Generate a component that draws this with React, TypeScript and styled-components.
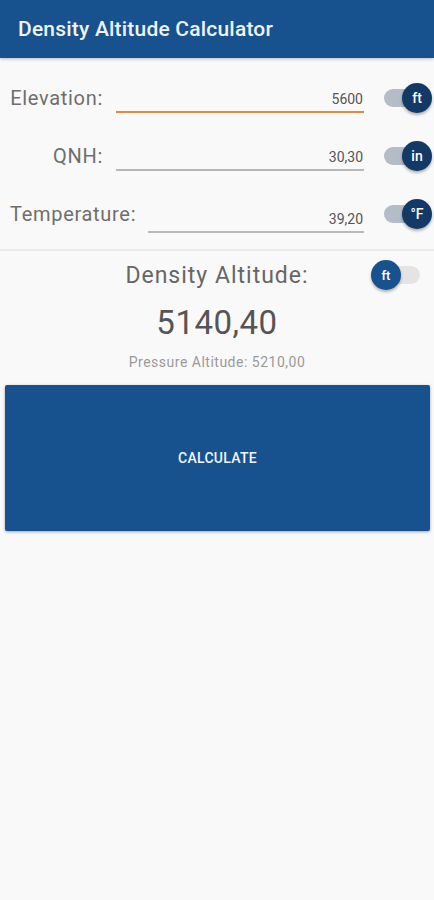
import styled, { createGlobalStyle } from 'styled-components';

const GlobalStyle = createGlobalStyle`
  html, body {
    margin: 0;
    padding: 0;
    background: #f9f9f9;
    font-family: Roboto, "Noto Sans", sans-serif;
  }
`;

interface IRow {
  label: string;
  value: string;
  unit: string;
  labelWidth: number;
  active?: boolean;
  drop?: number;
}

const rows: IRow[] = [
  { label: 'Elevation:', value: '5600', unit: 'ft', labelWidth: 93, active: true },
  { label: 'QNH:', value: '30,30', unit: 'in', labelWidth: 93 },
  { label: 'Temperature:', value: '39,20', unit: '°F', labelWidth: 125, drop: 4 },
];

export default function App() {
  return (
    <Page>
      <GlobalStyle />
      <Header>Density Altitude Calculator</Header>
      <Form>
        {rows.map((r) => (
          <Row key={r.label}>
            <Label $width={r.labelWidth}>{r.label}</Label>
            <Field $active={r.active} $drop={r.drop ?? 0}>
              {r.value}
            </Field>
            <Switch>
              <Track />
              <Thumb>{r.unit}</Thumb>
            </Switch>
          </Row>
        ))}
      </Form>
      <Result>
        <ResultHead>
          <span />
          <ResultTitle>Density Altitude:</ResultTitle>
          <OffSwitch>
            <OffTrack />
            <OffThumb>ft</OffThumb>
          </OffSwitch>
        </ResultHead>
        <ResultValue>5140,40</ResultValue>
        <Pressure>Pressure Altitude: 5210,00</Pressure>
      </Result>
      <CalcButton>CALCULATE</CalcButton>
    </Page>
  );
}

const Page = styled.div`
  width: 434px;
  min-height: 900px;
  background: #f9f9f9;
`;

const Header = styled.div`
  height: 58px;
  background: #17528f;
  color: #eef3f9;
  font-size: 21px;
  font-weight: 500;
  letter-spacing: 0.2px;
  display: flex;
  align-items: center;
  padding-left: 18px;
  box-shadow: 0 1px 3px rgba(0, 0, 0, 0.25);
`;

const Form = styled.div`
  padding: 11px 2px 6px 10px;
  border-bottom: 2px solid #ececec;
`;

const Row = styled.div`
  height: 58px;
  display: flex;
  align-items: center;
`;

const Label = styled.div<{ $width: number }>`
  width: ${(p) => p.$width}px;
  text-align: right;
  font-size: 20px;
  color: #6e6e6e;
  margin-right: 13px;
  flex-shrink: 0;
  letter-spacing: 0.7px;
  white-space: nowrap;
`;

const Field = styled.div<{ $active?: boolean; $drop: number }>`
  flex: 1;
  margin-top: ${(p) => 8 + p.$drop * 2}px;
  padding: 0 1px 4px;
  text-align: right;
  font-size: 14px;
  color: #555;
  border-bottom: ${(p) => (p.$active ? '2px solid #e08a3c' : '2px solid #b8b8b8')};
`;

const Switch = styled.div`
  position: relative;
  width: 48px;
  height: 30px;
  margin-left: 20px;
  flex-shrink: 0;
`;

const Track = styled.div`
  position: absolute;
  left: 0;
  top: 6px;
  width: 34px;
  height: 18px;
  border-radius: 9px;
  background: #b3bcc7;
`;

const Thumb = styled.div`
  position: absolute;
  right: 0;
  top: 0;
  width: 30px;
  height: 30px;
  border-radius: 50%;
  background: #133a66;
  color: #fff;
  font-size: 14px;
  font-weight: 500;
  display: flex;
  align-items: center;
  justify-content: center;
  box-shadow: 0 2px 3px rgba(0, 0, 0, 0.3);
`;

const Result = styled.div`
  padding-top: 9px;
  display: flex;
  flex-direction: column;
  align-items: center;
`;

const ResultHead = styled.div`
  width: 100%;
  display: grid;
  grid-template-columns: 1fr auto 1fr;
  align-items: center;
`;

const ResultTitle = styled.div`
  font-size: 23px;
  color: #666;
  letter-spacing: 1px;
`;

const OffSwitch = styled.div`
  position: relative;
  justify-self: end;
  margin-right: 14px;
  width: 49px;
  height: 30px;
`;

const OffTrack = styled.div`
  position: absolute;
  right: 0;
  top: 6px;
  width: 38px;
  height: 18px;
  border-radius: 9px;
  background: #e4e4e4;
`;

const OffThumb = styled(Thumb)`
  left: 0;
  right: auto;
  background: #17528f;
  font-size: 13px;
`;

const ResultValue = styled.div`
  margin-top: 13px;
  font-size: 33px;
  color: #555;
  letter-spacing: 0.5px;
`;

const Pressure = styled.div`
  margin-top: 12px;
  font-size: 14px;
  color: #9a9a9a;
  letter-spacing: 0.5px;
`;

const CalcButton = styled.button`
  display: flex;
  align-items: center;
  justify-content: center;
  width: 425px;
  height: 146px;
  margin: 15px 0 0 5px;
  border: 0;
  border-radius: 2px;
  background: #17528f;
  color: #f2f5f9;
  font-family: Roboto, "Noto Sans", sans-serif;
  font-size: 14px;
  font-weight: 500;
  letter-spacing: 0.3px;
  box-shadow: 0 1px 3px rgba(0, 0, 0, 0.35);
`;
